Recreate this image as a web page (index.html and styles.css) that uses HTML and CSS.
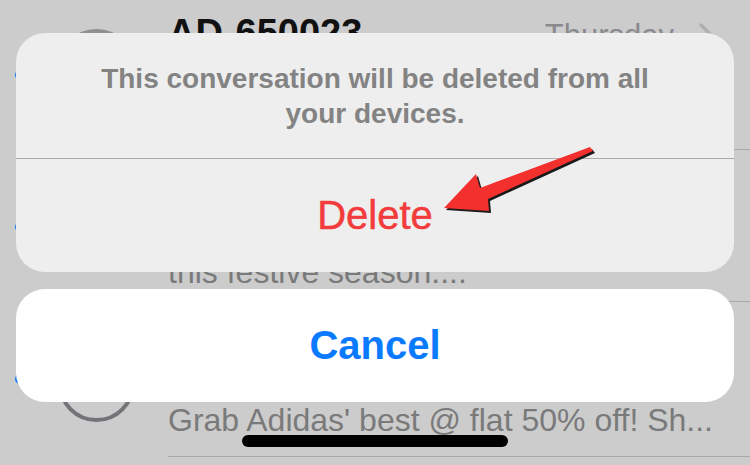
FILE: index.html
```html
<!DOCTYPE html>
<html>
<head>
<meta charset="utf-8">
<link rel="stylesheet" href="styles.css">
</head>
<body>
<div class="list">
  <div class="row row-first">
    <span class="dot"></span>
    <div class="avatar filled"></div>
    <div class="content">
      <div class="head"><span class="title">AD-650023</span><span class="date">Thursday</span><svg class="chev" width="14" height="24" viewBox="0 0 14 24"><path d="M2 2 L12 12 L2 22" fill="none" stroke="#b0b0b3" stroke-width="3.5" stroke-linecap="round" stroke-linejoin="round"/></svg></div>
      <div class="preview">Shop the latest styles from adidas</div>
    </div>
  </div>
  <div class="row">
    <span class="dot"></span>
    <div class="avatar"></div>
    <div class="content">
      <div class="head"><span class="title">AD-ADIDAS</span><span class="date">Tuesday</span><svg class="chev" width="14" height="24" viewBox="0 0 14 24"><path d="M2 2 L12 12 L2 22" fill="none" stroke="#b0b0b3" stroke-width="3.5" stroke-linecap="round" stroke-linejoin="round"/></svg></div>
      <div class="preview">Celebrate with the best deals</div>
      <div class="preview">this festive season....</div>
    </div>
  </div>
  <div class="row row-last">
    <span class="dot"></span>
    <div class="avatar"></div>
    <div class="content">
      <div class="head"><span class="title">AD-ADIDAS</span><span class="date">Monday</span><svg class="chev" width="14" height="24" viewBox="0 0 14 24"><path d="M2 2 L12 12 L2 22" fill="none" stroke="#b0b0b3" stroke-width="3.5" stroke-linecap="round" stroke-linejoin="round"/></svg></div>
      <div class="preview">New arrivals are here.</div>
      <div class="preview">Grab Adidas' best @ flat 50% off! Sh...</div>
    </div>
  </div>
</div>

<div class="home-bar"></div>

<div class="sheet-wrap">
  <div class="sheet">
    <p class="message">This conversation will be deleted from all your devices.</p>
    <div class="action delete">Delete</div>
  </div>
  <div class="sheet cancel-sheet">
    <div class="action cancel">Cancel</div>
  </div>
</div>

<svg class="arrow" width="750" height="465" viewBox="0 0 750 465">
  <polygon fill="#1a1a1a" points="446,210 478,176 482,190 592,149 595,153 490,201 491,213"/>
  <polygon fill="#f4302f" points="444,208 476,174 480,188 590,147 593,151 488,199 489,211"/>
</svg>
</body>
</html>
```
FILE: styles.css
```css
html, body {
  margin: 0;
  padding: 0;
}
body {
  width: 750px;
  height: 465px;
  overflow: hidden;
  background: #cccccc;
  font-family: "Liberation Sans", Arial, sans-serif;
  position: relative;
}
.list {
  display: flex;
  flex-direction: column;
}
.row {
  height: 152px;
  display: flex;
  align-items: flex-start;
  position: relative;
}
.row-first {
  margin-top: -2px;
}
.row-last {
  height: 155px;
}
.dot {
  width: 10px;
  height: 10px;
  border-radius: 50%;
  background: #0a7aff;
  margin: 72px 0 0 15px;
  flex: none;
}
.avatar {
  width: 69px;
  height: 69px;
  border-radius: 50%;
  border: 4px solid #747478;
  margin: 43px 0 0 33px;
  flex: none;
}
.avatar.filled {
  background: #8e8e93;
  border-color: #8e8e93;
  margin-top: 31px;
}
.content {
  flex: 1;
  align-self: stretch;
  margin-left: 33px;
  padding-top: 14px;
  min-width: 0;
  box-sizing: border-box;
  border-bottom: 1px solid #a9a9a9;
}
.row:nth-child(2) .content { padding-top: 9px; }
.row:nth-child(3) .content { padding-top: 5px; }
.head {
  display: flex;
  align-items: baseline;
  height: 50px;
}
.title {
  font-weight: bold;
  font-size: 38px;
  color: #111;
  flex: 1;
}
.date {
  font-size: 31px;
  color: #8a8a8e;
}
.chev {
  align-self: flex-start;
  margin: 11px 37px 0 25px;
  flex: none;
}
.preview {
  font-size: 32px;
  line-height: 42px;
  color: #7a7a7a;
  white-space: nowrap;
}

.home-bar {
  position: absolute;
  left: 242px;
  top: 435px;
  width: 266px;
  height: 12px;
  border-radius: 6px;
  background: #000;
}

.sheet-wrap {
  position: absolute;
  left: 16px;
  top: 33px;
  width: 718px;
  display: flex;
  flex-direction: column;
  gap: 17px;
}
.sheet {
  background: #eeeeee;
  border-radius: 29px;
  display: flex;
  flex-direction: column;
  overflow: hidden;
}
.message {
  margin: 0;
  padding: 28px 80px 27px;
  height: 70px;
  border-bottom: 1px solid #aaaaaa;
  text-align: center;
  font-weight: bold;
  font-size: 28px;
  line-height: 35px;
  color: #838383;
}
.action {
  height: 113px;
  display: flex;
  align-items: center;
  justify-content: center;
  font-size: 40px;
}
.delete {
  color: #f23b3b;
  -webkit-text-stroke: 0.5px #f23b3b;
}
.cancel-sheet {
  background: #ffffff;
}
.cancel {
  color: #0a7aff;
  font-weight: bold;
}
.arrow {
  position: absolute;
  left: 0;
  top: 0;
}
```
